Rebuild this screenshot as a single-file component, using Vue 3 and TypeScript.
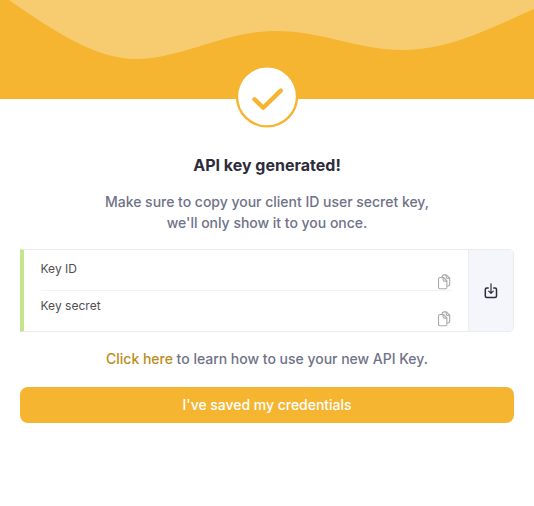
<script setup lang="ts">
interface KeyField {
  id: string
  label: string
}

const fields: KeyField[] = [
  { id: 'key-id', label: 'Key ID' },
  { id: 'key-secret', label: 'Key secret' },
]
</script>

<template>
  <main class="dialog">
    <header class="banner">
      <svg class="wave" viewBox="0 0 534 99" aria-hidden="true">
        <path d="M9 0 C55 32 96 59 136 59 C182 59 224 31 276 31 C323 31 357 50 403 50 C448 50 489 29 534 9 V0 Z" />
      </svg>
      <svg class="badge" viewBox="0 0 64 64" aria-hidden="true">
        <circle cx="32" cy="32.4" r="30" />
        <path d="M19.5 35.3 L28.2 43.8 L45.7 26.6" />
      </svg>
    </header>
    <section class="content">
      <h1>API key generated!</h1>
      <p class="lead">Make sure to copy your client ID user secret key,<br />we'll only show it to you once.</p>
      <div class="card">
        <div class="fields">
          <div v-for="field in fields" :key="field.id" class="field">
            <span class="label">{{ field.label }}</span>
            <button class="copy" type="button">
              <svg viewBox="0 0 14 16">
                <path d="M4 3.1 Q4.1 .9 6.2 .9 H8.3 L11.7 4.2 V10.3 Q11.7 12 10 12 H9.2" />
                <path d="M2 3.5 H5.5 L8.9 6.9 V13.3 Q8.9 14.8 7.4 14.8 H2 Q.5 14.8 .5 13.3 V5 Q.5 3.5 2 3.5 Z" />
                <path d="M5.1 3.8 V5.7 Q5.1 7.1 6.5 7.1 H8.7 M8.2 1.2 V3 Q8.2 4.4 9.6 4.4 H11.5" />
              </svg>
            </button>
          </div>
        </div>
        <button class="download" type="button">
          <svg viewBox="0 0 14 16">
            <path d="M4.2 4.9 H2.8 Q1.3 4.9 1.3 6.4 V13.1 Q1.3 14.6 2.8 14.6 H11 Q12.5 14.6 12.5 13.1 V6.4 Q12.5 4.9 11 4.9 H9.7" />
            <path class="arrow" d="M7 .8 V10 M4.7 8.1 L7 10.3 L9.3 8.1" />
          </svg>
        </button>
      </div>
      <p class="help"><a>Click here</a> to learn how to use your new API Key.</p>
      <button class="confirm" type="button">I've saved my credentials</button>
    </section>
  </main>
</template>

<style>
body {
  background: #fff;
}
</style>

<style scoped>
.dialog {
  width: 534px;
  height: 506px;
  overflow: hidden;
  font-family: Inter, 'Liberation Sans', sans-serif;
  background: #fff;
}
.banner {
  position: relative;
  height: 99px;
  background: #f5b531;
}
.wave {
  display: block;
  width: 534px;
  height: 99px;
  fill: #f7cc70;
}
.badge {
  position: absolute;
  left: 235px;
  top: 64px;
  width: 64px;
  height: 64px;
}
.badge circle {
  fill: #fff;
  stroke: #f5b531;
  stroke-width: 2.4;
}
.badge path {
  fill: none;
  stroke: #f5b531;
  stroke-width: 4.4;
  stroke-linecap: round;
  stroke-linejoin: round;
}
.content {
  display: flex;
  flex-direction: column;
  padding: 56px 20px 0;
  text-align: center;
}
h1 {
  margin: 0;
  font-size: 16px;
  line-height: 20px;
  font-weight: 700;
  color: #2e2c3b;
}
.lead,
.help {
  margin: 0;
  font-size: 14px;
  line-height: 21px;
  font-weight: 500;
  letter-spacing: -0.015px;
  color: #6f7288;
}
.lead {
  margin-top: 16px;
}
.card {
  box-sizing: border-box;
  display: flex;
  height: 83px;
  margin-top: 16px;
  border: 1px solid #ebecf0;
  border-left: 4px solid #c3e58b;
  border-radius: 0 5px 5px 0;
}
.fields {
  flex: 1;
  padding: 4px 16px 0 16.5px;
}
.field {
  box-sizing: border-box;
  display: flex;
  justify-content: space-between;
  height: 37px;
}
.field:first-child {
  border-bottom: 1px solid #f3f3f5;
}
.label {
  margin-top: 7px;
  font-size: 12px;
  line-height: 16px;
  font-weight: 400;
  letter-spacing: 0.03px;
  color: #4f4f4f;
}
button {
  padding: 0;
  border: 0;
  font-family: inherit;
  background: none;
}
.copy {
  width: 14px;
  height: 16px;
  margin-top: 20px;
}
svg {
  display: block;
}
.copy svg,
.download svg {
  width: 14px;
  height: 16px;
  overflow: visible;
  fill: none;
  stroke-linecap: round;
  stroke-linejoin: round;
}
.copy svg {
  stroke: #a8a8a8;
  stroke-width: 1.1;
}
.download {
  display: flex;
  align-items: center;
  justify-content: center;
  width: 45px;
  border-left: 1px solid #ebecf0;
  border-radius: 0 4px 4px 0;
  background: #f5f6fb;
}
.download svg {
  stroke: #2e2c3b;
  stroke-width: 1.5;
}
.download .arrow {
  stroke-width: 1.2;
}
.help {
  margin-top: 16px;
}
.help a {
  color: #b98d20;
}
.confirm {
  height: 36px;
  margin-top: 18px;
  border-radius: 8px;
  font-size: 14px;
  line-height: 20px;
  font-weight: 500;
  letter-spacing: -0.03px;
  color: #fff;
  background: #f5b531;
}
</style>
